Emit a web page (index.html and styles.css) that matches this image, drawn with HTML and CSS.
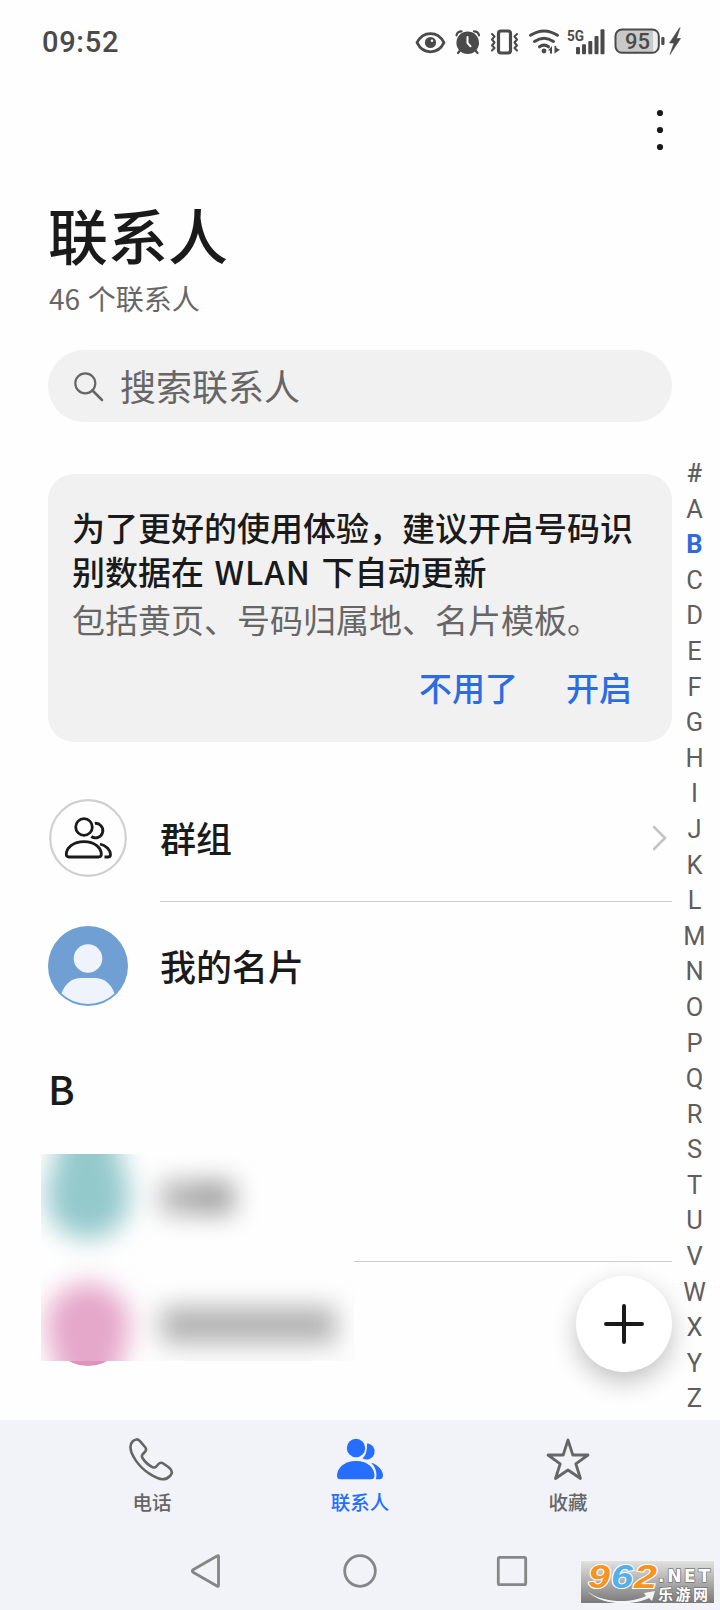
FILE: index.html
```html
<!DOCTYPE html>
<html lang="zh-CN">
<head>
<meta charset="utf-8">
<title>联系人</title>
<link rel="stylesheet" href="styles.css">
</head>
<body>
<div class="phone">
  <header class="status">
    <span class="clock">09:52</span>
    <svg class="status-icons" viewBox="0 0 300 60" fill="none" stroke="#4a4a4a" stroke-linecap="round" stroke-linejoin="round">
      <path d="M17 32.7C23 20.6 38 20.6 44 32.7C38 44.8 23 44.8 17 32.7Z" stroke-width="2.8"/>
      <circle cx="30.5" cy="32.5" r="5.6" fill="#4a4a4a" stroke="none"/><circle cx="32" cy="30.8" r="1.2" fill="#fff" stroke="none"/>
      <circle cx="67.7" cy="32.7" r="11.3" fill="#4a4a4a" stroke="none"/>
      <path d="M56.5 25.3C57 22.5 59 21.3 61.5 21.3M79 25.3C78.5 22.5 76.5 21.3 74 21.3M60 40.5L58 43M75.5 40.5L77.500 43" stroke-width="2.2"/>
      <path d="M67.500 27V33L70.500 36.300" stroke="#fff" stroke-width="2"/>
      <rect x="98.500" y="21" width="12" height="22" rx="2.500" stroke-width="3.200"/>
      <path d="M92 24L94.500 26.500L92 29.500L94.500 32.500L92 35.500L94.500 38L92 40.500M117 24L114.500 26.500L117 29.500L114.500 32.500L117 35.500L114.500 38L117 40.500" stroke-width="2"/>
      <path d="M130.500 25.300Q144 16.500 157.500 25.300M134.500 31.500Q144 25 153.500 31.500M139.500 36.800Q144 33.500 148.500 36.800" stroke-width="3"/>
      <g fill="#4a4a4a" stroke="none">
        <circle cx="144" cy="41" r="2.400"/>
        <path d="M148 40.500L152 36V43.500H150V40.500ZM154.500 36H156.300V38L160 39.700L154.500 43.500Z"/>
        <text class="net" x="167" y="31.300" textLength="17" lengthAdjust="spacingAndGlyphs">5G</text>
        <rect x="176" y="37" width="4" height="7.300" rx="1"/><rect x="182" y="34.300" width="4" height="10" rx="1"/><rect x="188.300" y="31" width="4" height="13.300" rx="1"/><rect x="194.500" y="26" width="4" height="18.300" rx="1"/><rect x="200.500" y="19.300" width="4" height="25" rx="1"/>
        <rect x="215" y="19" width="44" height="24" rx="7" fill="#eee"/>
        <path d="M222 19H253V43H222Q215 43 215 36V26Q215 19 222 19Z" fill="#c9c9c9"/>
        <rect x="261.300" y="27" width="3.200" height="8" rx="1"/>
        <path d="M279.500 18L269.500 33H274L270 44.500L280.500 28.500H276.500L280 18Z" stroke="#4a4a4a" stroke-width=".6"/>
        <text class="level" x="225" y="39" textLength="25" lengthAdjust="spacingAndGlyphs">95</text>
      </g>
      <rect x="215.500" y="19.500" width="43.300" height="23.300" rx="6.500" stroke-width="2"/>
    </svg>
  </header>

  <div class="toolbar">
    <svg class="more" viewBox="0 0 12 42" fill="#1a1a1a"><circle cx="6" cy="4" r="3.100"/><circle cx="6" cy="21" r="3.100"/><circle cx="6" cy="38" r="3.100"/></svg>
  </div>

  <div class="body">
    <main class="content">
      <h1 class="title">联系人</h1>
      <p class="count"><span class="number">46</span> 个联系人</p>
      <div class="search">
        <svg class="search-icon" viewBox="0 0 30 30" fill="none" stroke="#666" stroke-linecap="round"><circle cx="11.300" cy="11.300" r="10" stroke-width="2.200"/><path d="M18.500 18.500L28 28" stroke-width="2.600"/></svg>
        <span>搜索联系人</span>
      </div>
      <section class="card">
        <p class="card-title">为了更好的使用体验，建议开启号码识<br>别数据在<span class="latin"> WLAN </span>下自动更新</p>
        <p class="card-text">包括黄页、号码归属地、名片模板。</p>
        <div class="actions"><a>不用了</a><a>开启</a></div>
      </section>
      <div class="row group">
        <svg class="avatar" viewBox="0 0 80 80" fill="none" stroke="#1a1a1a" stroke-width="2.800" stroke-linecap="round">
          <circle cx="40" cy="40" r="37.800" stroke="#d0d0d0" stroke-width="2.200"/>
          <circle cx="36" cy="29" r="8.300"/>
          <path d="M46.800 25.300A7.300 7.300 0 1 1 43.300 38.500" stroke-linecap="butt"/>
          <path d="M36 43.700C25 43.700 18.300 50 18.300 56.300C18.300 58.200 19.300 59 21 59H50.500C52.300 59 53.300 58.200 53.300 56.300C53.300 50 47 43.700 36 43.700Z"/>
          <path d="M52 46C58.500 47.500 62.500 52.500 62.500 56.500C62.500 58.300 61.500 59 59.800 59H56.500" stroke-linecap="butt"/>
        </svg>
        <span class="row-label">群组</span>
        <svg class="chevron" viewBox="0 0 14 26" fill="none" stroke="#c4c4c4" stroke-width="2.600" stroke-linecap="round" stroke-linejoin="round"><path d="M1 2L12 13L1 24"/></svg>
      </div>
      <div class="row me">
        <svg class="avatar" viewBox="0 0 80 80">
          <circle cx="40" cy="40" r="40" fill="#6f9fd3"/>
          <circle cx="40" cy="32.500" r="14.300" fill="#eff4fc"/>
          <path d="M13.500 67.500C17 57.500 24 52 33 52H47C56 52 63 57.500 66.500 67.500Q55 78 40 78T13.500 67.500Z" fill="#eff4fc"/>
        </svg>
        <span class="row-label">我的名片</span>
      </div>
      <h2 class="letter">B</h2>
      <section class="contacts">
        <div class="contact"><i class="dot teal"></i><div class="line"></div></div>
        <div class="contact"><i class="dot pink"></i></div>
        <svg class="frost" viewBox="0 0 313 207">
          <defs>
            <filter id="soft" x="-100" y="-100" width="520" height="420" filterUnits="userSpaceOnUse" color-interpolation-filters="sRGB"><feGaussianBlur stdDeviation="13"/></filter>
          </defs>
          <rect width="313" height="207" fill="#fefefe"/>
          <g filter="url(#soft)">
            <path d="M5 43C5 24 17 12 20 -30H74C77 12 89 24 89 43A42 42 0 0 1 5 43Z" fill="#94c9cc"/>
            <path d="M5 171A42 42 0 0 1 89 171C89 190 77 204 74 240H20C17 204 5 190 5 171Z" fill="#e5a7ca"/>
            <rect x="120" y="27" width="40" height="33" fill="#b2b2b2"/><rect x="155" y="27" width="38" height="33" fill="#a0a0a0"/>
            <rect x="120" y="153" width="175" height="36" fill="#b0b0b0"/>
            <rect x="119" y="224" width="200" height="30" fill="#ddd"/>
          </g>
        </svg>
      </section>
    </main>
    <nav class="index">
      <b>#</b><span>A</span><b class="on">B</b><span>C</span><span>D</span><span>E</span><span>F</span><span>G</span><span>H</span><span>I</span><span>J</span><span>K</span><span>L</span><span>M</span><span>N</span><span>O</span><span>P</span><span>Q</span><span>R</span><span>S</span><span>T</span><span>U</span><span>V</span><span>W</span><span>X</span><span>Y</span><span>Z</span>
    </nav>
    <button class="fab" aria-label="新建联系人"><svg viewBox="0 0 40 40" stroke="#1a1a1a" stroke-width="4" stroke-linecap="round"><path d="M20 2V38M2 20H38"/></svg></button>
  </div>

  <footer class="bottom">
    <div class="tabs">
      <div class="tab">
        <svg viewBox="0 0 48 48" fill="none" stroke="#666" stroke-width="2.600" stroke-linejoin="round"><path d="M4.500 5.500Q8.500 1.500 12 5.200L17 11Q19.200 13.500 16.800 16L14.500 18.500Q13.300 20 14.500 22C17 26 21 29.500 24.800 31.300Q26.800 32 28.300 30.500L30.500 28Q32.500 25.800 35.300 27.500L41 31.500Q45.800 35.500 42.500 39.500Q37 45.500 29.500 42C18 37 8 27.500 3.500 16.500Q1 9 4.500 5.500Z"/></svg>
        <span>电话</span>
      </div>
      <div class="tab active">
        <svg viewBox="0 0 48 48" fill="#256eff">
          <circle cx="20" cy="12" r="9.200"/>
          <path d="M31 7.500A8 8 0 1 1 26.500 22.300Q31.500 18.300 31 7.500Z"/>
          <path d="M20 25C8 25 1 32.300 1 39.800Q1 43.300 4.500 43.300H35Q38.500 43.300 38.500 39.800C38.500 32.300 32 25 20 25Z"/>
          <path d="M35 26.800C42 28.300 47 34.800 47 39.300Q47 43.300 43.500 43.300H39.800C41.500 38.300 40 31.300 35 26.800Z"/>
        </svg>
        <span>联系人</span>
      </div>
      <div class="tab">
        <svg viewBox="0 0 48 48" fill="none" stroke="#666" stroke-width="2.800" stroke-linejoin="round"><path d="M24 4L28.800 19H44L31.800 27.800L36.500 42.500L24 34L11.500 42.500L16.200 27.800L4 19H19.200Z"/></svg>
        <span>收藏</span>
      </div>
    </div>
    <div class="system">
      <svg viewBox="0 0 36 36" fill="none" stroke="#868686" stroke-width="2.800" stroke-linejoin="round"><path d="M28.500 3.500V32.500Q28.500 34 27 33L3 19.200Q1.500 18 3 16.800L27 3Q28.500 2 28.500 3.500Z"/></svg>
      <svg viewBox="0 0 36 36" fill="none" stroke="#868686" stroke-width="2.800"><circle cx="18" cy="18" r="15.300"/></svg>
      <svg viewBox="0 0 36 36" fill="none" stroke="#868686" stroke-width="2.800"><rect x="4.300" y="4.300" width="27.400" height="27.400" rx="1.500"/></svg>
    </div>
    <svg class="badge" viewBox="0 0 135 44">
      <defs><linearGradient id="steel" x2="0" y2="1"><stop stop-color="#e4e4e4"/><stop offset="1" stop-color="#777"/></linearGradient></defs>
      <rect width="135" height="44" fill="url(#steel)" stroke="#f4f4f4" stroke-width="2"/>
      <path d="M7 31C25 45 55 42 66 36L64 33L75 31L72 41L69 38C52 46 22 46 7 31Z" fill="#f5f5f5"/>
      <g class="brand" stroke="#fff" stroke-width="2" paint-order="stroke">
        <text x="8" y="28" textLength="22" lengthAdjust="spacingAndGlyphs" fill="#f7931e">9</text>
        <text x="31" y="28" textLength="22" lengthAdjust="spacingAndGlyphs" fill="#55b0e8">6</text>
        <text x="54" y="28" textLength="23" lengthAdjust="spacingAndGlyphs" fill="#f7931e">2</text>
      </g>
      <text class="net-name" x="78" y="21.500" textLength="52" stroke="#777" stroke-width="1.500" paint-order="stroke" fill="#fff">.NET</text>
      <text class="cn-name" x="78" y="39.500" textLength="50" stroke="#777" stroke-width="1.500" paint-order="stroke" fill="#fff">乐游网</text>
    </svg>
  </footer>
</div>
</body>
</html>
```
FILE: styles.css
```css
* { box-sizing: border-box; }
body, h1, h2, p { margin: 0; }
body {
  background: #fefefe;
  color: #1a1a1a;
  font-family: "Noto Sans CJK SC", sans-serif;
}
svg { display: block; }
.phone { width: 720px; height: 1610px; display: flex; flex-direction: column; overflow: hidden; }

.status { height: 84px; display: flex; padding: 10px 20px 0 42px; justify-content: space-between; }
.clock { font: 500 29px/65px Roboto, sans-serif; letter-spacing: .7px; color: #4a4a4a; }
.status-icons { width: 300px; height: 60px; }
.net { font: 700 15.5px Roboto, sans-serif; }
.level { font: 500 22px Roboto, sans-serif; }

.toolbar { height: 109px; display: flex; justify-content: flex-end; padding: 25px 54px 0 0; }
.more { width: 12px; height: 42px; }

.body { position: relative; display: flex; height: 1227px; }
.content { width: 672px; padding-left: 48px; }
.title { font-size: 60px; font-weight: 500; line-height: 82px; }
.count { margin-top: 5px; padding-left: 1px; font-size: 28px; line-height: 36px; color: #666; word-spacing: 1.5px; }
.search {
  height: 72px; margin-top: 34px; padding: 0 26px; border-radius: 36px; background: #f1f1f1;
  display: flex; align-items: center; gap: 16px; font-size: 36px; line-height: 68px; color: #666;
}
.search span { margin-top: -2px; }
.search-icon { width: 30px; height: 30px; margin-top: 2px; }
.card { height: 268px; margin-top: 52px; padding: 31px 0 0 24px; border-radius: 26px; background: #f1f1f1; }
.card-title { font-size: 33px; font-weight: 500; line-height: 44px; white-space: nowrap; }
.latin { letter-spacing: 1px; word-spacing: 2px; }
.card-text { margin-top: 6px; font-size: 33px; line-height: 40px; color: #666; white-space: nowrap; }
.actions {
  display: flex; justify-content: flex-end; gap: 48px; margin-top: 28px; padding-right: 40px;
  font-size: 33px; font-weight: 500; line-height: 40px; color: #2d6be0;
}
.row { display: flex; align-items: center; }
.avatar { width: 80px; height: 80px; flex: none; }
.row-label { margin: -3px 0 0 32px; font-size: 36px; font-weight: 500; line-height: 52px; }
.group {
  height: 160px; padding-top: 33px; padding-bottom: 1px;
  background: linear-gradient(#ccc, #ccc) 112px 159px / 512px 1px no-repeat;
}
.chevron { width: 14px; height: 26px; margin: 0 5px 0 auto; }
.me { height: 128px; }
.letter { height: 60px; margin-top: 28px; font-size: 40px; font-weight: 500; line-height: 60px; }
.contacts { position: relative; height: 215px; margin-top: 36px; }
.contact { height: 108px; display: flex; align-items: flex-end; }
.contact + .contact { padding-bottom: 3px; height: 107px; }
.dot { width: 80px; height: 80px; flex: none; border-radius: 50%; }
.teal { background: #80bfc3; }
.pink { background: #dd94ba; }
.line { height: 1px; margin-left: 32px; background: #ccc; flex: 1; }
.frost { position: absolute; left: -7px; top: 0; width: 313px; height: 207px; }

.index {
  width: 48px; padding: 263px 3px 0 0; display: flex; flex-direction: column; align-items: center;
  font: 400 25.5px/35.6px Roboto, sans-serif; color: #5e5e5e;
}
.index b { font-weight: 500; }
.index .on { color: #2d6be0; font-weight: 700; }
.fab {
  position: absolute; left: 576px; top: 1083px; width: 96px; height: 96px; padding: 0; border: 0;
  border-radius: 50%; background: #fff; display: flex; align-items: center; justify-content: center;
  box-shadow: 0 10px 26px rgba(0, 0, 0, .24);
}
.fab svg { width: 40px; height: 40px; }

.bottom { position: relative; height: 190px; background: #f1f3f8; }
.tabs { display: flex; padding: 16px 48px 0; }
.tab { width: 208px; display: flex; flex-direction: column; align-items: center; font-size: 19.5px; line-height: 28px; color: #666; font-weight: 500; }
.tab svg { width: 48px; height: 48px; }
.tab span { margin-top: 4px; }
.active { color: #256eff; }
.system { display: flex; justify-content: center; gap: 116px; margin-top: 37px; }
.system svg { width: 36px; height: 36px; }
.badge { position: absolute; left: 580px; top: 140px; width: 135px; height: 44px; }
.brand { font: italic 700 33px "Liberation Sans", sans-serif; }
.net-name { font: 700 17px "DejaVu Sans", sans-serif; }
.cn-name { font: 700 15px "Noto Sans CJK SC", sans-serif; }
```
